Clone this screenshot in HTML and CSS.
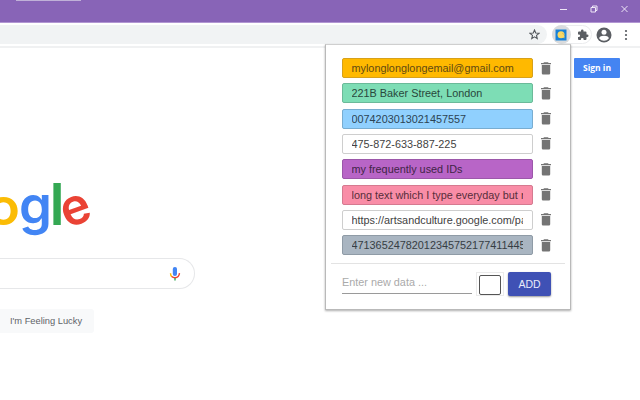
FILE: index.html
```
<!DOCTYPE html>
<html lang="en">
<head>
<meta charset="utf-8">
<title>Google</title>
<link rel="stylesheet" href="styles.css">
</head>
<body>
<svg class="defs" width="0" height="0" aria-hidden="true">
  <symbol id="trash" viewBox="0 0 10 13"><path d="M3 0.3h4l.6.7H10v1.3H0V1h2.4zM.8 3h8.4v8.3q0 1.2-1.2 1.2H2q-1.2 0-1.2-1.2z"/></symbol>
</svg>
<header class="titlebar">
  <span class="tab-edge"></span>
  <svg class="window-controls" width="72" height="12" viewBox="0 0 72 12"><path d="M0 6.5h7M31 4.5h4.5V9H31zM32.5 4.5V3H37v4.5h-1.5M61.5 3l6 6M67.500 3l-6 6"/></svg>
</header>
<div class="toolbar">
  <div class="address">
    <svg width="11" height="11" viewBox="0 0 11 11"><path class="star" d="M5.500 1l1.25 3 3.250.3-2.500 2.100.75 3.200-2.750-1.700-2.750 1.700.75-3.200L1 4.300 4.250 4z"/></svg>
  </div>
  <div class="extensions">
    <span class="active-ext"><svg width="12" height="12" viewBox="0 0 12 12"><path fill="#1680d8" d="M.5.500h11v11H.5z"/><circle cx="6" cy="5.700" r="3.500" fill="#f7d764"/><path d="M7 7l2.600.2-.4 2.300z" fill="#f7d764"/><path d="M7.500 4.500l1.300.8" stroke="#b69b45" stroke-width=".7"/></svg></span>
    <svg class="puzzle" width="12" height="12" viewBox="0 0 24 24"><path d="M20.500 11H19V7a2 2 0 0 0-2-2h-4V3.500a2.500 2.500 0 0 0-5 0V5H4a2 2 0 0 0-2 2v3.800h1.500a2.700 2.700 0 0 1 0 5.400H2V20a2 2 0 0 0 2 2h3.800v-1.500a2.700 2.700 0 0 1 5.400 0V22H17a2 2 0 0 0 2-2v-4h1.500a2.500 2.500 0 0 0 0-5z"/></svg>
  </div>
  <svg class="profile" width="16" height="16" viewBox="0 0 16 16"><circle cx="8" cy="8" r="7.500" fill="#5b5e63"/><circle cx="8" cy="5.200" r="2.500" fill="#fff"/><path d="M3.200 11.500q0-2.700 4.800-2.700t4.800 2.700Q11 13.800 8 13.800t-4.800-2.300z" fill="#fff"/></svg>
  <svg class="more" width="4" height="12" viewBox="0 0 4 12"><circle cx="2" cy="2" r="1.100"/><circle cx="2" cy="6" r="1.100"/><circle cx="2" cy="10" r="1.100"/></svg>
</div>
<main class="page">
  <svg class="logo" width="96" height="72" viewBox="0 0 96 72">
    <text class="yellow" x="-13" y="50.500" textLength="33" lengthAdjust="spacingAndGlyphs">o</text>
    <text class="blue" x="19" y="50" textLength="33" lengthAdjust="spacingAndGlyphs">g</text>
    <text class="green" x="49.500" y="50.500">l</text>
    <text class="red" x="61" y="50.500" textLength="29.500" lengthAdjust="spacingAndGlyphs" transform="rotate(-20 75.500 36.500)">e</text>
  </svg>
  <div class="search">
    <svg width="12" height="16" viewBox="0 0 12 16"><rect x="3.800" y="1" width="4.200" height="9" rx="2" fill="#4285f4"/><path d="M1.500 7.200q0 2.300 1.400 3.500" stroke="#fbbc05"/><path d="M2.700 10.500Q4 11.700 6 11.700q4 0 4.500-4.500" stroke="#ea4335"/><path d="M6 12v2.500" stroke="#34a853"/></svg>
  </div>
  <button class="lucky">I'm Feeling Lucky</button>
</main>
<a class="signin">Sign in</a>
<aside class="popup">
  <ul class="items">
    <li><span class="field amber"><span class="clip">mylonglonglongemail@gmail.com</span></span><svg><use href="#trash"/></svg></li>
    <li><span class="field mint"><span class="clip">221B Baker Street, London</span></span><svg><use href="#trash"/></svg></li>
    <li><span class="field sky"><span class="clip">0074203013021457557</span></span><svg><use href="#trash"/></svg></li>
    <li><span class="field"><span class="clip">475-872-633-887-225</span></span><svg><use href="#trash"/></svg></li>
    <li><span class="field purple"><span class="clip">my frequently used IDs</span></span><svg><use href="#trash"/></svg></li>
    <li><span class="field pink"><span class="clip">long text which I type everyday but not</span></span><svg><use href="#trash"/></svg></li>
    <li><span class="field"><span class="clip">https://artsandculture.google.com/partner</span></span><svg><use href="#trash"/></svg></li>
    <li><span class="field slate"><span class="clip">471365247820123457521774114456</span></span><svg><use href="#trash"/></svg></li>
  </ul>
  <div class="entry">
    <span class="new-data">Enter new data ...</span>
    <span class="swatch"></span>
    <button class="add">ADD</button>
  </div>
</aside>
</body>
</html>
```
FILE: styles.css
```
* { box-sizing: border-box; }
body { margin: 0; width: 640px; height: 400px; overflow: hidden; position: relative; background: #fff; font-family: "Liberation Sans", Arial, sans-serif; }
svg { display: block; flex: none; }
.defs { position: absolute; }
.titlebar { height: 23px; background: #8864b7; border-bottom: 1px solid #b296d3; display: flex; justify-content: space-between; }
.tab-edge { width: 65px; height: 1px; margin-left: 16px; background: #c0b1d8; }
.window-controls { margin: 3px 8px 0 0; fill: none; stroke: #eee6f7; stroke-width: 1; }
.toolbar { height: 25px; padding: 2px 12px 2px 0; border-bottom: 2px solid #f0f1f2; display: flex; align-items: center; }
.address { width: 547px; height: 19px; padding-right: 7px; background: #f1f3f4; border-radius: 0 10px 10px 0; display: flex; align-items: center; justify-content: flex-end; }
.star { fill: none; stroke: #55595e; stroke-width: 1.1; }
.extensions { width: 40px; height: 19px; margin-left: 5px; border: 1px solid #ebecee; border-radius: 10px; display: flex; align-items: center; }
.active-ext { width: 19px; height: 19px; margin-left: -1px; border-radius: 50%; background: #d9dbdd; display: flex; align-items: center; justify-content: center; }
.active-ext svg { margin-left: -1px; }
.puzzle { margin-left: 6px; fill: #5b5e63; }
.profile { margin-left: 4px; }
.more { margin-left: 12px; fill: #55595e; }
.page { display: flex; flex-direction: column; align-items: flex-start; }
.logo { margin-top: 126px; font-family: Inter, sans-serif; font-size: 51px; font-weight: 600; }
.yellow { fill: #fbbc05; }
.blue { fill: #4285f4; font-size: 53px; }
.green { fill: #34a853; font-size: 58px; }
.red { fill: #ea4335; }
.search { width: 195px; height: 31px; margin-top: 12px; padding-right: 13px; border: 1px solid #e6e7e9; border-left: 0; border-radius: 0 16px 16px 0; display: flex; align-items: center; justify-content: flex-end; }
.search path { fill: none; stroke-width: 1.4; }
.lucky { width: 94px; height: 24px; margin-top: 20px; padding: 0 0 0 10px; border: 0; border-radius: 0 3px 3px 0; background: #f8f9fa; color: #5f6368; font: 9.300px "Liberation Sans", Arial, sans-serif; text-align: left; white-space: nowrap; }
.signin { position: absolute; left: 574px; top: 58px; width: 46px; height: 20px; border-radius: 1px; background: #4484f2; color: #fff; font: bold 8.500px/20px "Open Sans", sans-serif; text-align: center; }
.popup { position: absolute; left: 325px; top: 44px; width: 246px; height: 266px; padding-top: 13px; border: 1px solid #b9b9b9; border-top-color: #cfcfcf; background: #fff; box-shadow: 0 1px 2px rgba(0, 0, 0, .32); }
.items { list-style: none; margin: 0 5px; padding: 0 0 8px 11px; height: 206px; border-bottom: 1px solid #e3e3e3; display: flex; flex-direction: column; gap: 5.330px; }
.items li { display: flex; align-items: center; height: 20px; flex: none; }
.items svg { width: 10px; height: 13px; margin-left: 8px; fill: #747474; }
.field { width: 191px; height: 20px; padding: 0 9px 0 8.500px; border: 1px solid #cecece; border-radius: 2px; background: #fff; color: #424242; font-size: 10.850px; line-height: 18px; flex: none; }
.clip { display: block; overflow: hidden; white-space: nowrap; }
.amber { background: #ffb900; border-color: #d7a11a; color: #624a12; }
.mint { background: #7dddb5; border-color: #6bba99; color: #29483c; }
.sky { background: #90d0fe; border-color: #78add1; color: #2c4353; }
.purple { background: #b865c7; border-color: #9c57aa; color: #3f2446; }
.pink { background: #f98da7; border-color: #d57a90; color: #572e3a; }
.slate { background: #a9b5c1; border-color: #8f9ba6; color: #363d43; }
.entry { display: flex; align-items: flex-start; padding: 8px 0 0 16px; }
.new-data { width: 130px; height: 22px; border-bottom: 1px solid #9a9a9a; color: #aaa; font-size: 10.850px; line-height: 21px; }
.swatch { width: 28px; height: 24px; margin-left: 4px; border: 1px solid #ebebeb; padding: 2px; }
.swatch::before { content: ""; display: block; height: 18px; border: 1px solid #555; border-radius: 2px; }
.add { width: 43px; height: 24px; margin-left: 4px; padding: 0; border: 0; border-radius: 2px; background: #3f51b5; color: #e8eafa; font: 10.500px "Liberation Sans", Arial, sans-serif; box-shadow: 0 1px 2px rgba(0, 0, 0, .4); }
```
